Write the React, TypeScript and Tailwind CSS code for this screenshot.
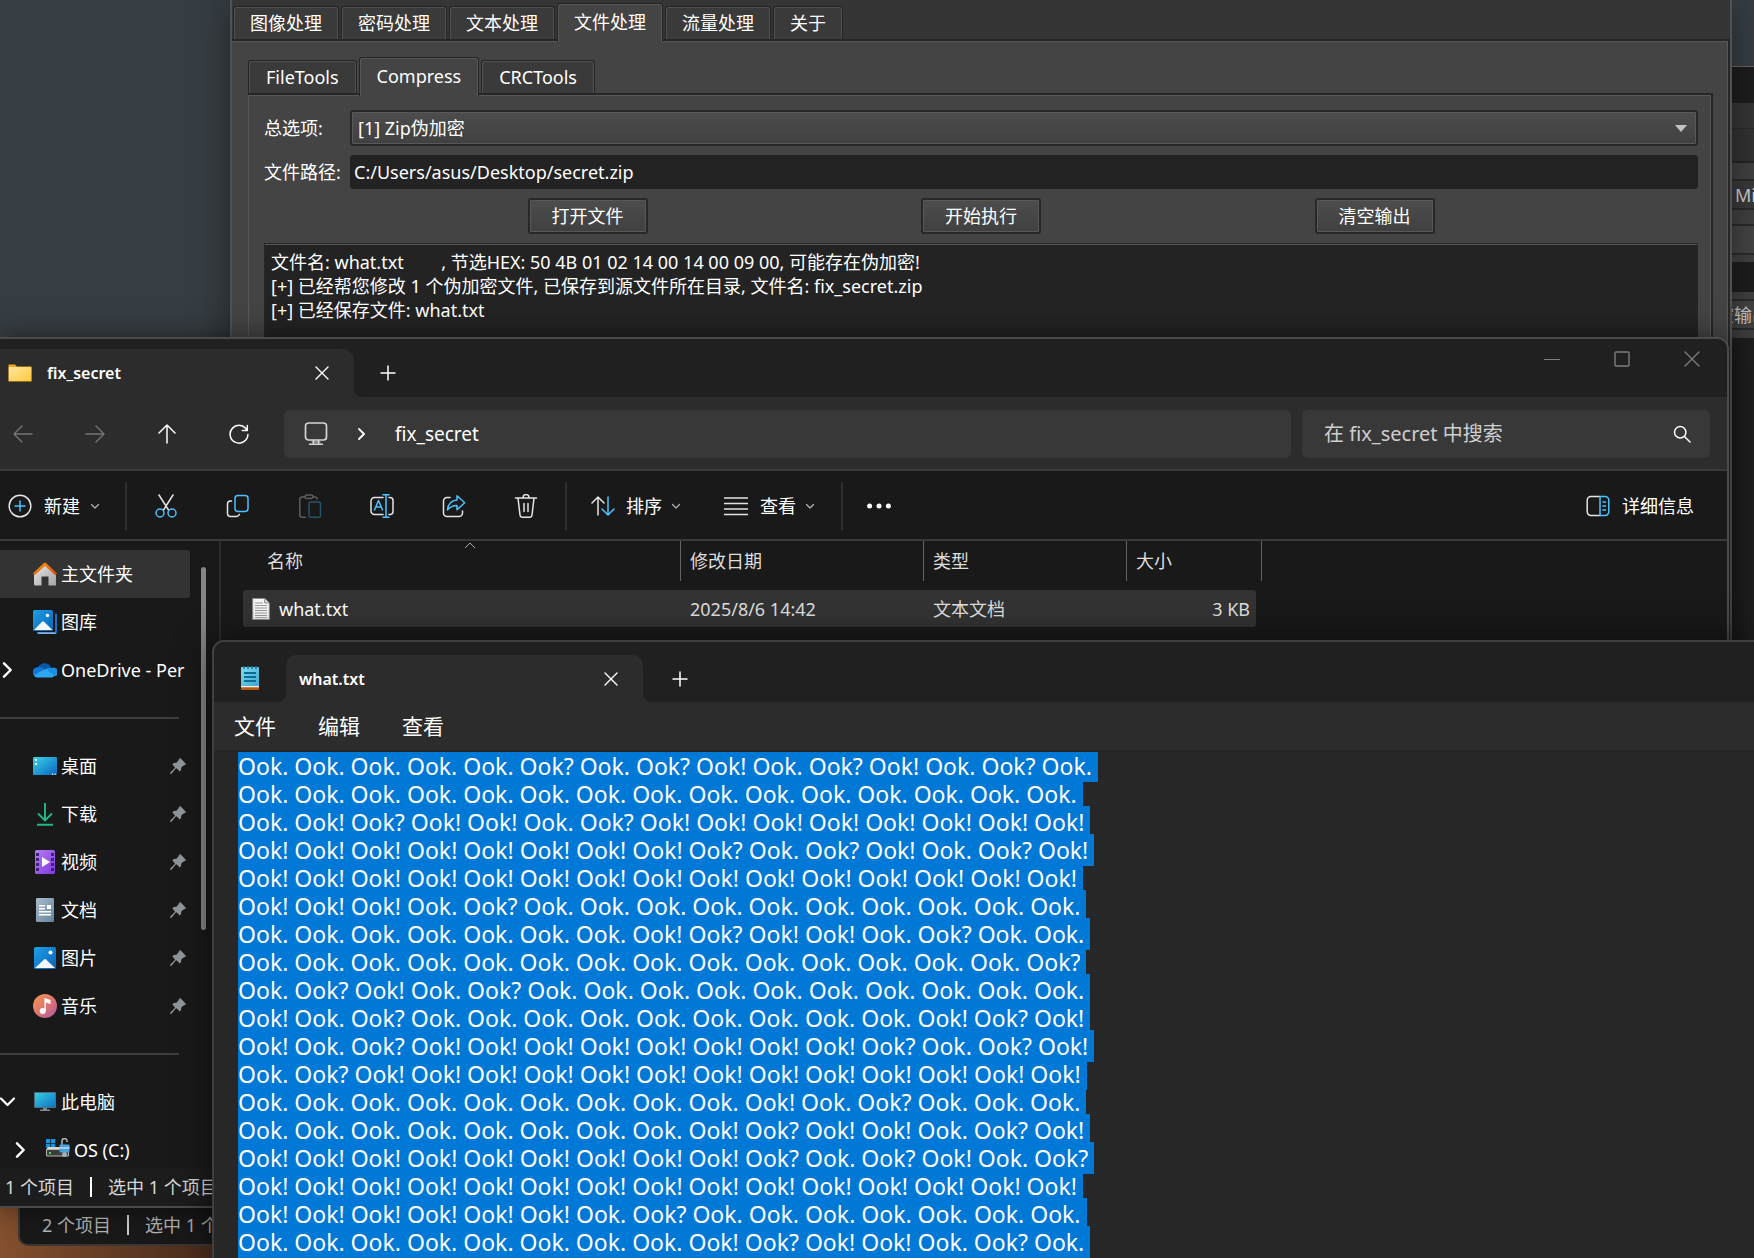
import { useEffect, useRef } from "react";
import type { ReactNode } from "react";

const BLUE = "#4cc2ff";

/* ---------- line icons ---------- */

function Svg({ size = 24, children, box = 24 }: { size?: number; box?: number; children: ReactNode }) {
  return (
    <svg
      width={size}
      height={size}
      viewBox={`0 0 ${box} ${box}`}
      fill="none"
      stroke="currentColor"
      strokeWidth="1.5"
      strokeLinecap="round"
      strokeLinejoin="round"
      className="shrink-0"
      aria-hidden="true"
    >
      {children}
    </svg>
  );
}

const CloseIcon = () => (
  <Svg size={14} box={14}>
    <path d="M1 1l12 12M13 1L1 13" strokeWidth="1.4" />
  </Svg>
);
const PlusIcon = () => (
  <Svg size={16} box={16}>
    <path d="M8 1v14M1 8h14" />
  </Svg>
);
const BackIcon = () => (
  <Svg size={20} box={20}>
    <path d="M19 10H1M9 2L1 10l8 8" strokeWidth="1.4" />
  </Svg>
);
const ForwardIcon = () => (
  <Svg size={20} box={20}>
    <path d="M1 10h18M11 2l8 8-8 8" strokeWidth="1.4" />
  </Svg>
);
const UpIcon = () => (
  <Svg size={20} box={20}>
    <path d="M10 19V1M2 9l8-8 8 8" />
  </Svg>
);
const RefreshIcon = () => (
  <Svg size={20} box={20}>
    <path d="M18 6.300A8.900 8.900 0 1 0 18.900 10.500M18.300 1.500v5h-5" />
  </Svg>
);
const MonitorIcon = () => (
  <Svg>
    <rect x="1.500" y="1" width="21" height="17" rx="3" strokeWidth="1.700" />
    <path d="M9.500 18.500v3M14.500 18.500v3M5.500 22.300h13" />
    <path d="M8 20h8" strokeWidth="1" />
  </Svg>
);
const ChevronRight = ({ size = 12 }: { size?: number }) => (
  <Svg size={size} box={12}>
    <path d="M3 1l5 5-5 5" strokeWidth="1.8" />
  </Svg>
);
const ChevronDown = () => (
  <Svg size={10} box={10}>
    <path d="M1.500 3.500l3.500 3.500 3.500-3.500" strokeWidth="1.200" stroke="#b5b5b5" />
  </Svg>
);
const SearchIcon = () => (
  <Svg size={18} box={18}>
    <circle cx="7.2" cy="7.2" r="5.7" />
    <path d="M11.5 11.5L17 17" />
  </Svg>
);
const NewIcon = () => (
  <Svg>
    <circle cx="12" cy="12" r="10.8" />
    <path d="M12 7v10M7 12h10" stroke={BLUE} />
  </Svg>
);
const CutIcon = () => (
  <Svg>
    <path d="M5 1l9.5 15M19 1L9.500 16" />
    <circle cx="6" cy="19" r="4" stroke={BLUE} />
    <circle cx="18" cy="19" r="4" stroke={BLUE} />
  </Svg>
);
const CopyIcon = () => (
  <Svg>
    <path d="M5.500 7H4.500a3 3 0 0 0-3 3v9.500a3 3 0 0 0 3 3h6a3 3 0 0 0 2.800-2" />
    <rect x="9" y="1.500" width="13" height="16" rx="3" stroke={BLUE} />
  </Svg>
);
const PasteIcon = () => (
  <Svg>
    <g stroke="#5d5d5d">
      <path d="M7 3H4a2.200 2.200 0 0 0-2.200 2.200V21A2.200 2.200 0 0 0 4 23.200h3.500M15 3h2a2 2 0 0 1 2 2" />
      <rect x="7" y="1" width="8" height="3.500" rx="1.700" />
    </g>
    <rect x="11" y="8" width="11.500" height="15.200" rx="2" stroke="#265367" />
  </Svg>
);
const RenameIcon = () => (
  <Svg>
    <path d="M13 3.500H4.500a3.500 3.500 0 0 0-3.500 3.500v10a3.500 3.500 0 0 0 3.500 3.500H13M19 3.500h1a3 3 0 0 1 3 3v11a3 3 0 0 1-3 3h-1" />
    <path d="M4.500 16l4-9.500 4 9.500M6 13h5M16 1v22M13 .8h6M13 23.200h6" stroke={BLUE} />
  </Svg>
);
const ShareIcon = () => (
  <Svg>
    <path d="M8 3.500H5A3.500 3.500 0 0 0 1.500 7v12A3.500 3.500 0 0 0 5 22.500h12a3.500 3.500 0 0 0 3.500-3.500v-2" />
    <path d="M15 1.800l7.700 7-7.700 7v-4.300c-4 0-7 1.500-9.500 4.500.5-6 4-9.500 9.500-10z" stroke={BLUE} />
  </Svg>
);
const TrashIcon = () => (
  <Svg>
    <path d="M1.500 4h21M4 4l2 17a2.500 2.500 0 0 0 2.500 2.200h7A2.500 2.500 0 0 0 18 21l2-17M9 3.500a3 3 0 0 1 6 0M10 9.500v8M14 9.500v8" />
  </Svg>
);
const SortIcon = () => (
  <Svg>
    <path d="M7 21V3M1 9l6-6 6 6" />
    <path d="M17 3v18M11 15l6 6 6-6" stroke={BLUE} />
  </Svg>
);
const ViewIcon = () => (
  <Svg>
    <path d="M0 4h24M0 9.500h24M0 15h24M0 20.500h24" strokeLinecap="butt" />
  </Svg>
);
const MoreIcon = () => (
  <Svg>
    <g fill="currentColor" stroke="none">
      <circle cx="2.600" cy="12" r="2.500" />
      <circle cx="12" cy="12" r="2.500" />
      <circle cx="21.400" cy="12" r="2.500" />
    </g>
  </Svg>
);
const DetailsIcon = () => (
  <Svg>
    <path d="M14 2.500H5A3.800 3.800 0 0 0 1.200 6.300v11.400A3.800 3.800 0 0 0 5 21.500h9" />
    <path d="M14 2.500h5a3.800 3.800 0 0 1 3.800 3.800v11.400a3.800 3.800 0 0 1-3.800 3.800h-5zM17 8h2.500M17 12h2.500M17 16h2.500" stroke={BLUE} />
  </Svg>
);
const PinIcon = () => (
  <svg width="16" height="16" viewBox="0 0 16 16" aria-hidden="true">
    <path d="M9.300.7a1 1 0 0 1 1.500-.1l4.600 4.600a1 1 0 0 1-.2 1.600l-3.500 2-1 3.800-.9.900-3.600-3.400L1.500 15.800.2 16l.2-1.500 4.700-4.700L2.400 6.300l.9-1 3.700-.9z" fill="#8f979d" />
  </svg>
);

/* ---------- colour icons ---------- */

const FolderIcon = () => (
  <svg width="24" height="24" viewBox="0 0 24 24" aria-hidden="true">
    <defs>
      <linearGradient id="fold" x1="0" y1="0" x2="1" y2="1">
        <stop offset="0" stopColor="#ffe7a0" />
        <stop offset="1" stopColor="#ffc839" />
      </linearGradient>
    </defs>
    <path d="M.5 3.500h6.500L9 5.500h14.500V20.500H.5z" fill="#f0a818" />
    <rect x=".8" y="6" width="22.500" height="14" rx=".8" fill="url(#fold)" />
  </svg>
);
const HomeIcon = () => (
  <svg width="24" height="24" viewBox="0 0 24 24" aria-hidden="true">
    <defs>
      <linearGradient id="wall" x1="0" y1="0" x2="1" y2="1">
        <stop offset="0" stopColor="#e9e9e9" />
        <stop offset="1" stopColor="#a3a3a3" />
      </linearGradient>
      <linearGradient id="roof" x1="0" y1="0" x2="1" y2="1">
        <stop offset="0" stopColor="#f9a11b" />
        <stop offset="1" stopColor="#d8430b" />
      </linearGradient>
    </defs>
    <path d="M1 12L12 2l11 10v11.500h-7.500v-9h-7v9H2.500a1.500 1.500 0 0 1-1.500-1.500z" fill="url(#wall)" />
    <path d="M0 11.300L11 .9a1.400 1.400 0 0 1 2 0l11 10.400-1.600 2L12 3.900 1.600 13.300z" fill="url(#roof)" />
  </svg>
);
const PictureIcon = ({ stacked = false }: { stacked?: boolean }) => (
  <svg width="24" height="24" viewBox="0 0 24 24" aria-hidden="true">
    <defs>
      <linearGradient id="pic" x1="0" y1="0" x2="1" y2="1">
        <stop offset="0" stopColor="#1f9fe6" />
        <stop offset="1" stopColor="#0a62b8" />
      </linearGradient>
    </defs>
    {stacked ? (
      <>
        <path d="M22 3.500h1a1 1 0 0 1 1 1V22a2 2 0 0 1-2 2H6a2 2 0 0 1-2-1.500h17a1 1 0 0 0 1-1z" fill="#1c6fc0" />
        <path d="M4 22.300h17L23.500 23a2 2 0 0 1-1.500 1H6a2 2 0 0 1-2-1.700z" fill="#7cb4e6" />
        <rect x="0" y="0" width="20" height="21" rx="1.500" fill="url(#pic)" />
        <path d="M1 20l8-8.300a1.500 1.500 0 0 1 2 0L19.500 20z" fill="#f2f8fd" />
        <circle cx="14.500" cy="5.500" r="1.700" fill="#fff" />
      </>
    ) : (
      <>
        <rect x="1" y="1" width="22" height="22" rx="1.500" fill="url(#pic)" />
        <path d="M2 22l9-8.500a1.500 1.500 0 0 1 2 0L22 22z" fill="#f2f8fd" />
        <circle cx="17.500" cy="6.500" r="2" fill="#fff" />
      </>
    )}
  </svg>
);
const CloudIcon = () => (
  <svg width="24" height="24" viewBox="0 0 24 24" aria-hidden="true">
    <path d="M5.500 9a7 7 0 0 1 12.800 1l-7 6z" fill="#0a57a8" />
    <path d="M5 19.500a5 5 0 0 1 0-10.600c3-.3 5 1.600 7 3l4 3z" fill="#1276d4" />
    <path d="M5 19.500c-2 0-3-.8-4-2 2-1.500 9-5.500 12-6.500s4-1.200 6-1a5 5 0 0 1 0 9.500z" fill="#2aa7ee" />
    <path d="M14 12.200l8.500 6a4.500 4.500 0 0 0-3.500-8.300c-2 0-3.500.8-5 2.300z" fill="#1a8ee0" />
  </svg>
);
const DesktopIcon = () => (
  <svg width="24" height="24" viewBox="0 0 24 24" aria-hidden="true">
    <defs>
      <linearGradient id="desk" x1="0" y1="0" x2="1" y2="1">
        <stop offset="0" stopColor="#35d3e6" />
        <stop offset="1" stopColor="#0c66c0" />
      </linearGradient>
    </defs>
    <rect x="0" y="3" width="24" height="18" rx="1.300" fill="url(#desk)" />
    <path d="M2 5h2v2H2zM2 9h2v2H2zM19 19.500h1.200v1.200H19zM21.500 19.500h1.200v1.200h-1.200z" fill="#fff" />
  </svg>
);
const DownloadIcon = () => (
  <svg width="24" height="24" viewBox="0 0 24 24" fill="none" stroke="#22b88c" strokeWidth="1.900" aria-hidden="true">
    <path d="M12 1v17M5 11.500l7 7 7-7M4 22.700h16" />
  </svg>
);
const VideoIcon = () => (
  <svg width="24" height="24" viewBox="0 0 24 24" aria-hidden="true">
    <defs>
      <linearGradient id="vid" x1="0" y1="0" x2="1" y2="1">
        <stop offset="0" stopColor="#b67bf2" />
        <stop offset="1" stopColor="#7f3ae0" />
      </linearGradient>
    </defs>
    <rect x="2" y="0" width="20" height="24" rx="1.500" fill="url(#vid)" />
    <path
      d="M3 3h3v3H3zM3 8h3v3H3zM3 13h3v3H3zM3 18h3v3H3zM18 3h3v3h-3zM18 8h3v3h-3zM18 13h3v3h-3zM18 18h3v3h-3z"
      fill="#3f2277"
    />
    <path d="M9 7l8 5-8 5z" fill="#fff" />
  </svg>
);
const DocumentIcon = () => (
  <svg width="24" height="24" viewBox="0 0 24 24" aria-hidden="true">
    <defs>
      <linearGradient id="doc" x1="0" y1="0" x2="1" y2="1">
        <stop offset="0" stopColor="#a9bccd" />
        <stop offset="1" stopColor="#66839f" />
      </linearGradient>
    </defs>
    <rect x="3" y="0" width="18" height="24" rx="1.300" fill="url(#doc)" />
    <path d="M6 7h6v1.400H6zM6 10h6v1.400H6zM14 7h4v4h-4zM6 13h12v1.400H6zM6 16h12v1.400H6z" fill="#fff" />
  </svg>
);
const MusicIcon = () => (
  <svg width="24" height="24" viewBox="0 0 24 24" aria-hidden="true">
    <defs>
      <linearGradient id="mus" x1="0" y1="0" x2="1" y2="1">
        <stop offset="0" stopColor="#f59b4c" />
        <stop offset=".6" stopColor="#d86f76" />
        <stop offset="1" stopColor="#a05bb0" />
      </linearGradient>
    </defs>
    <circle cx="12" cy="12" r="12" fill="url(#mus)" />
    <circle cx="9.700" cy="17" r="3" fill="#fff" />
    <path d="M11.500 4l6 2v4l-4.600-1.500V17h-1.500z" fill="#fff" />
  </svg>
);
const ComputerIcon = () => (
  <svg width="24" height="24" viewBox="0 0 24 24" aria-hidden="true">
    <defs>
      <linearGradient id="pc" x1="0" y1="0" x2="1" y2="1">
        <stop offset="0" stopColor="#35cfe0" />
        <stop offset="1" stopColor="#0f72c4" />
      </linearGradient>
    </defs>
    <rect x="1" y="2" width="22" height="16" rx="1" fill="#4f6d7c" />
    <rect x="2" y="3" width="20" height="14" fill="url(#pc)" />
    <path d="M10 18h4v1.500h3V21H7v-1.500h3z" fill="#7d8b93" />
  </svg>
);
const DriveIcon = () => (
  <svg width="24" height="24" viewBox="0 0 24 24" aria-hidden="true">
    <path d="M0 1h4.300v4H0zM5 1h4.300v4H5zM0 5.700h4.300v4H0zM5 5.700h4.300v4H5z" fill="#1593e6" />
    <path d="M2 9h19l2 3H0z" fill="#d8d8d8" />
    <rect x="0" y="11" width="23" height="7.500" rx="1" fill="#b5b5b5" />
    <rect x="1" y="12" width="21" height="5.500" fill="#3c3c3c" />
    <rect x="3" y="14" width="2" height="2" fill="#3be03b" />
    <path d="M16 7V3a2.500 2.500 0 0 1 5 0v1" fill="none" stroke="#a9b8c2" strokeWidth="1.500" />
    <rect x="13.500" y="6.500" width="10" height="8" rx="1" fill="#4aa3dc" />
    <path d="M13.500 9h10v2h-10z" fill="#a5cbe4" />
    <circle cx="18.500" cy="16.500" r="2.500" fill="#9fb0ba" />
  </svg>
);
const TextFileIcon = () => (
  <svg width="18" height="24" viewBox="0 0 18 24" aria-hidden="true">
    <path d="M.7 1.500h12l4.600 4.500v16.500H.7z" fill="#f7f7f7" stroke="#8d8d8d" />
    <path d="M12.700 1.500V6h4.600" fill="#dcdcdc" stroke="#8d8d8d" />
    <path d="M3 6h8M3 8.500h12M3 11h12M3 13.500h12M3 16h12M3 18.500h12M3 20.700h12" stroke="#9b9b9b" />
  </svg>
);
const NotepadIcon = () => (
  <svg width="18" height="24" viewBox="0 0 18 24" aria-hidden="true">
    <defs>
      <linearGradient id="note" x1="0" y1="0" x2="1" y2="1">
        <stop offset="0" stopColor="#7ddcf3" />
        <stop offset="1" stopColor="#3fa8cf" />
      </linearGradient>
    </defs>
    <rect x="0" y="19" width="18" height="5" rx=".8" fill="#b5570f" />
    <rect x="0" y="19" width="18" height="2.300" fill="#f1ece6" />
    <rect x="0" y="1" width="18" height="19" rx=".8" fill="url(#note)" />
    <path d="M3 0v3M7 0v3M11 0v3M15 0v3" stroke="#1a7393" strokeWidth="1.600" />
    <path d="M3 7h12M3 11h12M3 15h12" stroke="#0b6d93" strokeWidth="1.800" />
  </svg>
);

/* ---------- toolkit window ---------- */

const inactiveTab =
  "flex h-[33px] items-center rounded-t-[3px] border border-b-0 border-[#242424] bg-[#3a3a3a] shadow-[inset_1px_1px_0_#515151,inset_-1px_0_0_#515151]";
const activeTab =
  "relative z-10 -mb-[3px] flex h-[39px] items-center rounded-t-[3px] border border-b-0 border-[#242424] bg-[#444444] pb-[3px] shadow-[inset_1px_1px_0_#585858,inset_-1px_0_0_#585858]";
const pushButton =
  "flex h-9 w-[120px] items-center justify-center rounded-[3px] border-2 border-[#282828] bg-linear-to-b from-[#4d4d4d] to-[#404040] shadow-[inset_0_0_0_1px_#585858]";

const LOG = [
  "文件名: what.txt        , 节选HEX: 50 4B 01 02 14 00 14 00 09 00, 可能存在伪加密!",
  "[+] 已经帮您修改 1 个伪加密文件, 已保存到源文件所在目录, 文件名: fix_secret.zip",
  "[+] 已经保存文件: what.txt",
].join("\n");

function ToolWindow() {
  const outer = ["图像处理", "密码处理", "文本处理", "文件处理", "流量处理", "关于"];
  const inner = ["FileTools", "Compress", "CRCTools"];
  return (
    <section
      aria-label="Toolkit"
      className="absolute top-0 right-[22px] left-[230px] h-[640px] overflow-hidden border-x-2 border-[#515151] bg-[#353535] text-[18px] leading-6 text-white shadow-[0_0_36px_rgba(0,0,0,0.45)]"
    >
      <div role="tablist" className="flex h-[39px] items-end gap-[2px] pl-px">
        {outer.map((name, i) => (
          <button key={name} role="tab" aria-selected={i === 3} className={(i === 3 ? activeTab : inactiveTab) + " px-[16px]"}>
            {name}
          </button>
        ))}
      </div>
      <div className="h-full border-t-2 border-r-2 border-[#262626] bg-[#444444] shadow-[inset_-1px_1px_0_#585858]">
        <div className="pt-[16px] pr-[15px] pl-[16px]">
          <div role="tablist" className="flex h-[36px] items-end gap-[2px]">
            {inner.map((name, i) => (
              <button key={name} role="tab" aria-selected={i === 1} className={(i === 1 ? activeTab : inactiveTab) + " px-[17px]"}>
                {name}
              </button>
            ))}
          </div>
          <div className="border-t-2 border-r-2 border-[#262626] pt-[15px] pr-[13px] pb-4 pl-[16px] shadow-[inset_-1px_1px_0_#585858,inset_1px_0_0_#585858]">
            <div className="grid grid-cols-[86px_1fr] items-center gap-y-[9px]">
              <label htmlFor="mode">总选项:</label>
              <div className="relative">
                <select
                  id="mode"
                  className="h-[36px] w-full appearance-none rounded-[3px] border-2 border-[#282828] bg-linear-to-b from-[#4d4d4d] to-[#404040] pl-[6px] shadow-[inset_0_0_0_1px_#585858]"
                >
                  <option>[1] Zip伪加密</option>
                </select>
                <svg width="12" height="7" viewBox="0 0 12 7" className="absolute top-[15px] right-[11px]" aria-hidden="true">
                  <path d="M0 0h12L6 7z" fill="#c4c4c4" />
                </svg>
              </div>
              <label htmlFor="path">文件路径:</label>
              <input
                id="path"
                defaultValue="C:/Users/asus/Desktop/secret.zip"
                className="h-[34px] w-full rounded-[3px] bg-[#232323] px-1 outline-none"
              />
            </div>
            <div className="mt-[9px] flex justify-evenly gap-[10px]">
              <button className={pushButton}>打开文件</button>
              <button className={pushButton}>开始执行</button>
              <button className={pushButton}>清空输出</button>
            </div>
            <textarea
              aria-label="输出"
              readOnly
              wrap="off"
              defaultValue={LOG}
              className="mt-[9px] block h-[260px] w-full resize-none overflow-hidden border border-[#262626] bg-[#232323] px-[6px] py-[6px] leading-[24px] shadow-[inset_0_1px_0_#555555] outline-none"
            />
          </div>
        </div>
      </div>
    </section>
  );
}

/* Sliver of a second toolkit window that peeks out at the right. */
function RearToolWindow() {
  return (
    <section
      aria-label="Toolkit, rear window"
      className="absolute top-[66px] right-0 bottom-0 flex w-[26px] flex-col overflow-hidden border-t border-[#6b6767] bg-[#414141] pl-1 text-[18px] leading-6 whitespace-nowrap text-[#d0d0d0]"
    >
      <div className="-ml-1 h-[36px] shrink-0 bg-[#1d1d1d]" />
      <div className="-ml-1 h-[26px] shrink-0 border-b border-[#2a2a2a] bg-[#363636]" />
      <div className="-ml-1 h-[34px] shrink-0 border-b-2 border-[#242424] bg-[#333333]" />
      <div className="h-[16px] shrink-0" />
      <div className="-ml-1 flex h-[31px] shrink-0 items-center border-y-2 border-[#2b2b2b] bg-[#3a3a3a] pl-[7px]">Mi</div>
      <div className="h-[14px] shrink-0" />
      <div className="-ml-1 h-[31px] shrink-0 border-y-2 border-[#2b2b2b] bg-[#454545]" />
      <div className="h-[7px] shrink-0" />
      <div className="-ml-1 h-[30px] shrink-0 bg-[#1e1e1e]" />
      <div className="h-[7px] shrink-0" />
      <div className="-ml-1 flex h-[31px] shrink-0 items-center justify-end border-y-2 border-[#2b2b2b] bg-[#434343]">
        <span className="-mr-[16px]">空输出</span>
      </div>
      <div className="h-[8px] shrink-0" />
      <div className="-ml-1 grow border-l-2 border-[#3c3c3c] bg-[#202020]" />
    </section>
  );
}

/* ---------- file explorer ---------- */

function IconButton({ label, children }: { label: string; children: ReactNode }) {
  return (
    <button aria-label={label} className="flex h-12 w-[72px] shrink-0 items-center justify-center">
      {children}
    </button>
  );
}

function Separator() {
  return <div className="h-12 w-[2px] shrink-0 bg-[#2f2f2f]" />;
}

function SideRow({
  icon,
  name,
  pinned,
  selected,
  lead,
  nested,
}: {
  icon: ReactNode;
  name: string;
  pinned?: boolean;
  selected?: boolean;
  lead?: ReactNode;
  nested?: boolean;
}) {
  return (
    <li>
      <a
        href="#"
        className={
          "flex h-12 w-[190px] items-center rounded-r-[3px] whitespace-nowrap " + (selected ? "bg-[#333333]" : "")
        }
      >
        <span className={"flex shrink-0 " + (nested ? "w-[46px] pl-[13px]" : "w-[33px]")}>{lead}</span>
        <span className="w-6 shrink-0">{icon}</span>
        <span className="ml-[4px]">{name}</span>
        {pinned && (
          <span className="mr-1 ml-auto">
            <PinIcon />
          </span>
        )}
      </a>
    </li>
  );
}

function SideRule() {
  return (
    <li role="separator" className="flex h-12 items-center">
      <span className="h-[2px] w-[179px] bg-[#3d3d3d]" />
    </li>
  );
}

function ExplorerWindow() {
  const th = "border-r border-[#636363] pl-[9px] text-left font-normal";
  return (
    <section
      aria-label="fix_secret"
      className="absolute top-[337px] right-[25px] -left-[2px] flex h-[871px] flex-col overflow-hidden rounded-tr-[12px] border-2 border-[#4a4a4a] bg-[#191919] text-[18px] leading-6 text-white shadow-[0_0_30px_rgba(0,0,0,0.5)]"
    >
      <div className="flex h-[58px] shrink-0 items-end bg-[#202020]">
        <div className="relative flex h-[48px] w-[354px] items-center rounded-tr-[12px] bg-[#2c2c2c] pl-2">
          <FolderIcon />
          <span className="ml-[15px] text-[16px] font-semibold">fix_secret</span>
          <button aria-label="关闭标签页" className="mr-[25px] ml-auto">
            <CloseIcon />
          </button>
          <span className="absolute -right-[8px] bottom-0 size-[8px] rounded-bl-[8px] bg-[#202020] shadow-[-3px_3px_0_0_#2c2c2c]" />
        </div>
        <button aria-label="新建标签页" className="mb-[16px] ml-[26px]">
          <PlusIcon />
        </button>
        <div className="ml-auto flex h-full items-start text-[#7d7d7d]">
          <button aria-label="最小化" className="flex h-[40px] w-[70px] items-center justify-center">
            <Svg size={16} box={16}>
              <path d="M.5 8.500h15" strokeWidth="1.200" />
            </Svg>
          </button>
          <button aria-label="最大化" className="flex h-[40px] w-[70px] items-center justify-center">
            <Svg size={16} box={16}>
              <rect x="1" y="1" width="14" height="14" rx="1" strokeWidth="1.400" />
            </Svg>
          </button>
          <button aria-label="关闭" className="flex h-[40px] w-[70px] items-center justify-center">
            <Svg size={16} box={16}>
              <path d="M1 1l14 14M15 1L1 15" strokeWidth="1.300" />
            </Svg>
          </button>
        </div>
      </div>

      <div className="flex h-[74px] shrink-0 items-center border-b-2 border-[#3a3a3a] bg-[#2c2c2c] pt-[2px] pr-[17px] text-[19px]">
        <div className="-ml-[13px] flex w-[297px] shrink-0">
          <button aria-label="后退" className="flex w-[72px] justify-center text-[#747474]"><BackIcon /></button>
          <button aria-label="前进" className="flex w-[72px] justify-center text-[#747474]"><ForwardIcon /></button>
          <button aria-label="向上" className="flex w-[72px] justify-center"><UpIcon /></button>
          <button aria-label="刷新" className="flex w-[72px] justify-center"><RefreshIcon /></button>
        </div>
        <div className="flex h-[48px] grow items-center rounded-[6px] bg-[#383838] pl-5">
          <span className="text-[#d5d5d5]"><MonitorIcon /></span>
          <span className="ml-[28px]"><ChevronRight /></span>
          <span className="ml-[27px]">fix_secret</span>
        </div>
        <div className="ml-[11px] flex h-[48px] w-[408px] shrink-0 items-center rounded-[6px] bg-[#383838] pr-[19px] pl-[22px]">
          <input
            aria-label="搜索"
            placeholder="在 fix_secret 中搜索"
            className="w-full min-w-0 bg-transparent text-[20px] outline-none placeholder:text-[#cfcfcf]"
          />
          <SearchIcon />
        </div>
      </div>

      <div className="flex h-[70px] shrink-0 items-center border-b-2 border-[#3a3a3a] pt-[2px] pl-2 text-[#e4e4e4]">
        <button className="flex w-[117px] shrink-0 items-center">
          <NewIcon />
          <span className="mr-[10px] ml-[12px] text-white">新建</span>
          <ChevronDown />
        </button>
        <Separator />
        <div className="flex shrink-0 px-[3px]">
          <IconButton label="剪切"><CutIcon /></IconButton>
          <IconButton label="复制"><CopyIcon /></IconButton>
          <IconButton label="粘贴"><PasteIcon /></IconButton>
          <IconButton label="重命名"><RenameIcon /></IconButton>
          <IconButton label="共享"><ShareIcon /></IconButton>
          <IconButton label="删除"><TrashIcon /></IconButton>
        </div>
        <Separator />
        <button className="ml-[24px] flex shrink-0 items-center">
          <SortIcon />
          <span className="mr-[9px] ml-[11px] text-white">排序</span>
          <ChevronDown />
        </button>
        <button className="mr-[26px] ml-[43px] flex shrink-0 items-center">
          <ViewIcon />
          <span className="mr-[9px] ml-[12px] text-white">查看</span>
          <ChevronDown />
        </button>
        <Separator />
        <button aria-label="更多" className="ml-[24px] shrink-0 text-white"><MoreIcon /></button>
        <button className="mr-[33px] ml-auto flex shrink-0 items-center">
          <DetailsIcon />
          <span className="ml-[12px] text-white">详细信息</span>
        </button>
      </div>

      <div className="flex min-h-0 grow">
        <nav className="relative w-[221px] shrink-0 overflow-hidden border-r-2 border-[#2b2b2b] pt-[9px]">
          <ul>
            <SideRow icon={<HomeIcon />} name="主文件夹" selected />
            <SideRow icon={<PictureIcon stacked />} name="图库" />
            <SideRow icon={<CloudIcon />} name="OneDrive - Per" lead={<ChevronRight size={16} />} />
            <SideRule />
            <SideRow icon={<DesktopIcon />} name="桌面" pinned />
            <SideRow icon={<DownloadIcon />} name="下载" pinned />
            <SideRow icon={<VideoIcon />} name="视频" pinned />
            <SideRow icon={<DocumentIcon />} name="文档" pinned />
            <SideRow icon={<PictureIcon />} name="图片" pinned />
            <SideRow icon={<MusicIcon />} name="音乐" pinned />
            <SideRule />
            <SideRow
              icon={<ComputerIcon />}
              name="此电脑"
              lead={
                <Svg size={16} box={16}>
                  <path d="M1 4.500l6.500 6.500L14 4.500" strokeWidth="2.200" />
                </Svg>
              }
            />
            <SideRow icon={<DriveIcon />} name="OS (C:)" nested lead={<ChevronRight size={16} />} />
          </ul>
          <div className="absolute top-[26px] right-[13px] h-[363px] w-[5px] rounded-full bg-[#858585]" />
        </nav>
        <div className="relative pl-[22px]">
          <svg width="12" height="7" viewBox="0 0 12 7" fill="none" stroke="#a8a8a8" className="absolute top-[1px] left-[243px]" aria-hidden="true">
            <path d="M1 6l5-5 5 5" />
          </svg>
          <table className="w-[1019px] table-fixed border-separate border-spacing-0 text-[#dedede]">
            <colgroup>
              <col className="w-[438px]" />
              <col className="w-[243px]" />
              <col className="w-[203px]" />
              <col className="w-[135px]" />
            </colgroup>
            <thead>
              <tr className="h-[40px]">
                <th className="border-r border-[#636363] pl-[24px] text-left font-normal">名称</th>
                <th className={th}>修改日期</th>
                <th className={th}>类型</th>
                <th className={th}>大小</th>
              </tr>
            </thead>
            <tbody>
              <tr>
                <td className="pt-[9px]">
                  <div className="flex h-[37px] items-center rounded-l-[3px] bg-[#333333] pl-[9px] text-white">
                    <TextFileIcon />
                    <span className="ml-[9px]">what.txt</span>
                  </div>
                </td>
                <td className="pt-[9px]">
                  <div className="flex h-[37px] items-center bg-[#333333] pl-[9px]">2025/8/6 14:42</div>
                </td>
                <td className="pt-[9px]">
                  <div className="flex h-[37px] items-center bg-[#333333] pl-[9px]">文本文档</div>
                </td>
                <td className="pt-[9px]">
                  <div className="mr-[6px] flex h-[37px] items-center justify-end rounded-r-[3px] bg-[#333333] pr-[6px]">3 KB</div>
                </td>
              </tr>
            </tbody>
          </table>
        </div>
      </div>

      <footer className="flex h-[38px] shrink-0 items-center bg-[#1c1c1c] pl-[5px] text-[#d8d8d8]">
        <span>1 个项目</span>
        <span className="mx-[16px] h-5 w-[2px] bg-white" />
        <span>选中 1 个项目</span>
      </footer>
    </section>
  );
}

/* Status bar of an explorer window lying underneath. */
function RearExplorerWindow() {
  return (
    <section
      aria-label="Explorer, rear window"
      className="absolute top-[1150px] left-[18px] flex h-[96px] w-[600px] items-end rounded-[10px] border-2 border-[#3b3633] bg-[#191919] pb-[7px] pl-[22px] text-[18px] leading-6 text-[#b4b4b4]"
    >
      <span>2 个项目</span>
      <span className="mx-[16px] mb-[2px] h-5 w-[2px] bg-[#cfcfcf]" />
      <span>选中 1 个项目</span>
    </section>
  );
}

/* ---------- notepad ---------- */

const OOK = [
  ".....?.?!.?!.?.",
  "...............",
  ".!?!!.?!!!!!!!!",
  "!!!!!!!!?.?!.?!",
  "!!!!!!!!!!!!!!!",
  "!!!.?..........",
  ".......!?!!.?..",
  "..............?",
  ".?!.?..........",
  "!.?.........!?!",
  "!.?!!!!!!!!?.?!",
  ".?!!!!!!!!!!!!!",
  ".........!.?...",
  "........!?!!.?!",
  "!!!!!!!!!?.?!.?",
  "!!!!!!!!!!!!!!!",
  "!!!!!!.?.......",
  "........!?!!.?.",
  "..............?",
  "...............",
];
const OOK_TEXT = OOK.map((line) => [...line].map((mark) => "Ook" + mark).join(" ")).join("\n");

function NotepadWindow() {
  const editor = useRef<HTMLTextAreaElement>(null);
  useEffect(() => {
    const el = editor.current;
    if (!el) return;
    el.focus({ preventScroll: true });
    el.setSelectionRange(0, el.value.length, "backward");
    el.scrollTop = 0;
  }, []);
  return (
    <section
      aria-label="what.txt"
      className="absolute top-[640px] -right-[2px] -bottom-[2px] left-[212px] flex flex-col overflow-hidden rounded-tl-[12px] border-2 border-[#404040] bg-[#272727] text-white shadow-[0_0_36px_rgba(0,0,0,0.55)]"
    >
      <div className="flex h-[60px] shrink-0 items-end bg-[#202020] pl-[27px]">
        <span className="mb-[12px]"><NotepadIcon /></span>
        <div className="relative ml-[27px] flex h-[47px] w-[357px] items-center rounded-t-[10px] bg-[#2c2c2c] pl-[13px]">
          <span className="absolute -left-[8px] bottom-0 size-[8px] rounded-br-[8px] bg-[#202020] shadow-[3px_3px_0_0_#2c2c2c]" />
          <span className="text-[16px] leading-6 font-semibold">what.txt</span>
          <button aria-label="关闭标签页" className="mr-[25px] ml-auto">
            <CloseIcon />
          </button>
          <span className="absolute -right-[8px] bottom-0 size-[8px] rounded-bl-[8px] bg-[#202020] shadow-[-3px_3px_0_0_#2c2c2c]" />
        </div>
        <button aria-label="新建标签页" className="mb-[15px] ml-[29px]"><PlusIcon /></button>
      </div>
      <div className="flex h-[48px] shrink-0 items-center gap-[42px] bg-[#2c2c2c] pl-[20px] text-[21px] leading-7">
        <button>文件</button>
        <button>编辑</button>
        <button>查看</button>
      </div>
      <textarea
        ref={editor}
        aria-label="文本编辑器"
        spellCheck={false}
        wrap="off"
        defaultValue={OOK_TEXT}
        className="mt-[2px] ml-[24px] block min-h-0 grow resize-none overflow-hidden bg-transparent text-[23px] leading-[28px] outline-none selection:bg-[#0078d7fe] selection:text-white"
      />
    </section>
  );
}

export default function App() {
  return (
    <main className="relative h-screen overflow-hidden bg-[#373e43] font-['Noto_Sans','Noto_Sans_CJK_SC',sans-serif]">
      <div className="absolute inset-x-0 bottom-0 h-[120px] bg-linear-to-r from-[#84502e] to-[#3f2519] to-[14%]" />
      <RearToolWindow />
      <ToolWindow />
      <RearExplorerWindow />
      <ExplorerWindow />
      <NotepadWindow />
    </main>
  );
}
